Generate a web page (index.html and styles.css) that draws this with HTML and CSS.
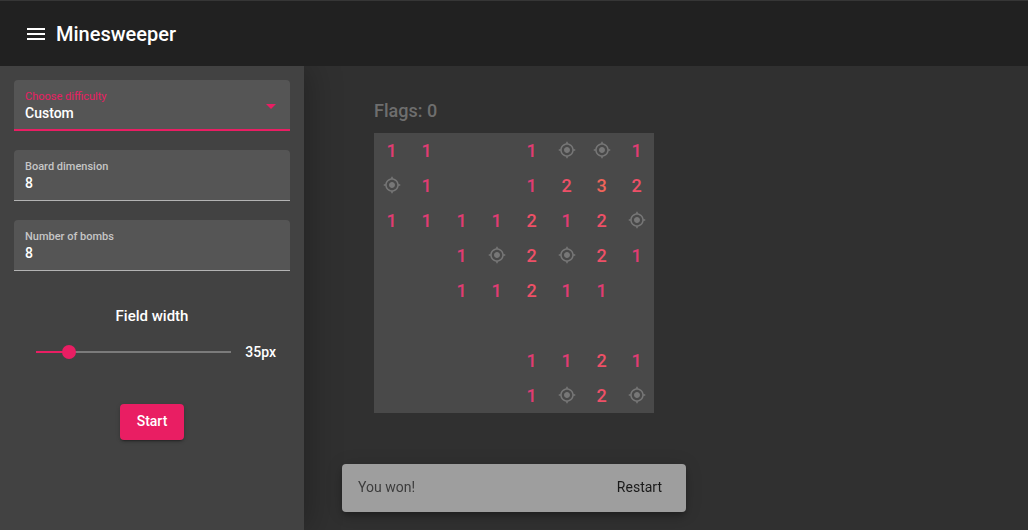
FILE: index.html
```html
<!DOCTYPE html>
<html lang="en">
<head>
<meta charset="utf-8">
<meta name="viewport" content="width=device-width, initial-scale=1">
<title>Minesweeper</title>
<link rel="stylesheet" href="styles.css">
</head>
<body>
<header class="toolbar">
  <button class="menu-button" type="button" aria-label="Toggle menu">
    <svg viewBox="0 0 24 24" width="24" height="24" fill="currentColor"><path d="M3 18h18v-2H3v2zm0-5h18v-2H3v2zm0-7v2h18V6H3z"/></svg>
  </button>
  <h1 class="title">Minesweeper</h1>
</header>
<div class="layout">
  <aside class="sidebar">
    <form class="settings">
      <div class="field field-active">
        <label class="field-label" for="difficulty">Choose difficulty</label>
        <select class="field-control" id="difficulty"><option>Custom</option></select>
        <svg class="arrow" viewBox="0 0 10 5" width="10" height="5" fill="currentColor"><path d="M0 0h10L5 5z"/></svg>
      </div>
      <div class="field">
        <label class="field-label" for="dimension">Board dimension</label>
        <input class="field-control" id="dimension" type="text" inputmode="numeric" value="8">
      </div>
      <div class="field">
        <label class="field-label" for="bombs">Number of bombs</label>
        <input class="field-control" id="bombs" type="text" inputmode="numeric" value="8">
      </div>
      <label class="slider-label" for="width">Field width</label>
      <div class="slider-row">
        <input class="slider" id="width" type="range" min="30" max="60" value="35">
        <output class="slider-value" for="width">35px</output>
      </div>
      <button class="start" type="button">Start</button>
    </form>
  </aside>
  <main class="game">
    <h2 class="flags">Flags: 0</h2>
    <div class="board" id="board"></div>
  </main>
</div>
<div class="snackbar" role="status">
  <span class="message">You won!</span>
  <button class="restart" type="button">Restart</button>
</div>
<script src="board.js"></script>
</body>
</html>
```
FILE: board.js
```js
const rows = [
  "11..1**1",
  "*1..1232",
  "1111212*",
  "..1*2*21",
  "..11211.",
  "........",
  "....1121",
  "....1*2*"
];
const bomb = '<svg viewBox="0 0 24 24" width="18" height="18" fill="currentColor"><path d="M12 8c-2.21 0-4 1.79-4 4s1.79 4 4 4 4-1.79 4-4-1.79-4-4-4zm8.94 3c-.46-4.17-3.77-7.48-7.94-7.94V1h-2v2.06C6.83 3.52 3.52 6.83 3.06 11H1v2h2.06c.46 4.17 3.77 7.48 7.94 7.94V23h2v-2.06c4.17-.46 7.48-3.77 7.94-7.94H23v-2h-2.06zM12 19c-3.87 0-7-3.13-7-7s3.13-7 7-7 7 3.13 7 7-3.13 7-7 7z"/></svg>';
const board = document.getElementById("board");
for (const value of rows.join("")) {
  const cell = document.createElement("button");
  cell.type = "button";
  cell.className = "cell";
  if (value === "*") {
    cell.classList.add("bomb");
    cell.setAttribute("aria-label", "Bomb");
    cell.innerHTML = bomb;
  } else if (value === ".") {
    cell.setAttribute("aria-label", "Empty");
  } else {
    cell.classList.add("near-" + value);
    cell.textContent = value;
  }
  board.append(cell);
}
```
FILE: styles.css
```css
* {
  box-sizing: border-box;
}

body {
  margin: 0;
  min-height: 100vh;
  display: flex;
  flex-direction: column;
  background: #303030;
  color: #fff;
  font: 500 14px/20px Roboto, sans-serif;
}

button,
input,
select {
  margin: 0;
  padding: 0;
  border: 0;
  background: none;
  color: inherit;
  font: inherit;
}

svg {
  display: block;
}

.toolbar {
  display: flex;
  align-items: center;
  gap: 8px;
  padding: 20px 24px 19px;
  border-top: 1px solid #363636;
  background: #212121;
}

.title {
  margin: 0;
  font-size: 20px;
  line-height: 26px;
  font-weight: 500;
}

.layout {
  flex: 1;
  display: flex;
}

.sidebar {
  width: 304px;
  padding: 14px;
  background: #424242;
  box-shadow: 6px 0 30px rgba(0, 0, 0, 0.25);
  clip-path: inset(0 -60px 0 0);
}

.settings {
  display: flex;
  flex-direction: column;
}

.field {
  position: relative;
  display: flex;
  flex-direction: column;
  margin-bottom: 19px;
  padding: 10px 11px 7px;
  border-bottom: 1px solid #b3b3b3;
  border-radius: 4px 4px 0 0;
  background: #555;
}

.field-active {
  padding-bottom: 6px;
  border-bottom: 2px solid #e91e63;
}

.field-label {
  color: #c6c6c6;
  font-size: 11px;
  line-height: 13px;
}

.field-active .field-label {
  color: #e91e63;
  font-weight: 400;
}

.field-control {
  width: 100%;
  height: 20px;
  appearance: none;
  outline: none;
}

.arrow {
  position: absolute;
  top: 24px;
  right: 14px;
  color: #e91e63;
  pointer-events: none;
}

.slider-label {
  margin-top: 16px;
  font-size: 15px;
  text-align: center;
}

.slider-row {
  display: flex;
  align-items: center;
  gap: 7px;
  margin: 16px 14px 42px 15px;
}

.slider {
  flex: 1;
  min-width: 0;
  height: 20px;
  appearance: none;
}

.slider::-webkit-slider-runnable-track {
  height: 14px;
  background:
    linear-gradient(#e91e63, #e91e63) 7px 6px / 33px 2px no-repeat,
    linear-gradient(#7b7b7b, #7b7b7b) 7px 6px / calc(100% - 14px) 2px no-repeat;
}

.slider::-webkit-slider-thumb {
  width: 14px;
  height: 14px;
  appearance: none;
  border-radius: 50%;
  background: #e91e63;
}

.start {
  align-self: center;
  min-width: 64px;
  padding: 0 16px 2px;
  border-radius: 4px;
  background: #e91e63;
  line-height: 34px;
  box-shadow: 0 3px 1px -2px rgba(0, 0, 0, 0.2), 0 2px 2px rgba(0, 0, 0, 0.14), 0 1px 5px rgba(0, 0, 0, 0.12);
}

.game {
  flex: 1;
  padding: 33px 70px;
}

.flags {
  position: relative;
  margin: 0 0 10px;
  color: #6e6e6e;
  font-size: 18px;
  line-height: 24px;
  font-weight: 500;
}

.board {
  position: relative;
  display: grid;
  grid-template-columns: repeat(8, 35px);
  grid-auto-rows: 35px;
  width: max-content;
  background: #494949;
}

.cell {
  display: grid;
  place-items: center;
  font-size: 18px;
}

.bomb {
  padding-bottom: 2px;
  color: #777;
}

.near-1 {
  color: #e13c74;
}

.near-2 {
  color: #ee5067;
}

.near-3 {
  color: #f0645a;
}

.snackbar {
  position: fixed;
  bottom: 18px;
  left: 50%;
  transform: translateX(-50%);
  width: 344px;
  display: flex;
  align-items: center;
  justify-content: space-between;
  padding: 5px 8px 7px 16px;
  border-radius: 4px;
  background: #9e9e9e;
  color: #3c3c3c;
  font-weight: 400;
  box-shadow: 0 3px 5px -1px rgba(0, 0, 0, 0.2), 0 6px 10px rgba(0, 0, 0, 0.14), 0 1px 18px rgba(0, 0, 0, 0.12);
}

.restart {
  padding: 0 16px;
  color: #1a1a1a;
  line-height: 36px;
}
```
